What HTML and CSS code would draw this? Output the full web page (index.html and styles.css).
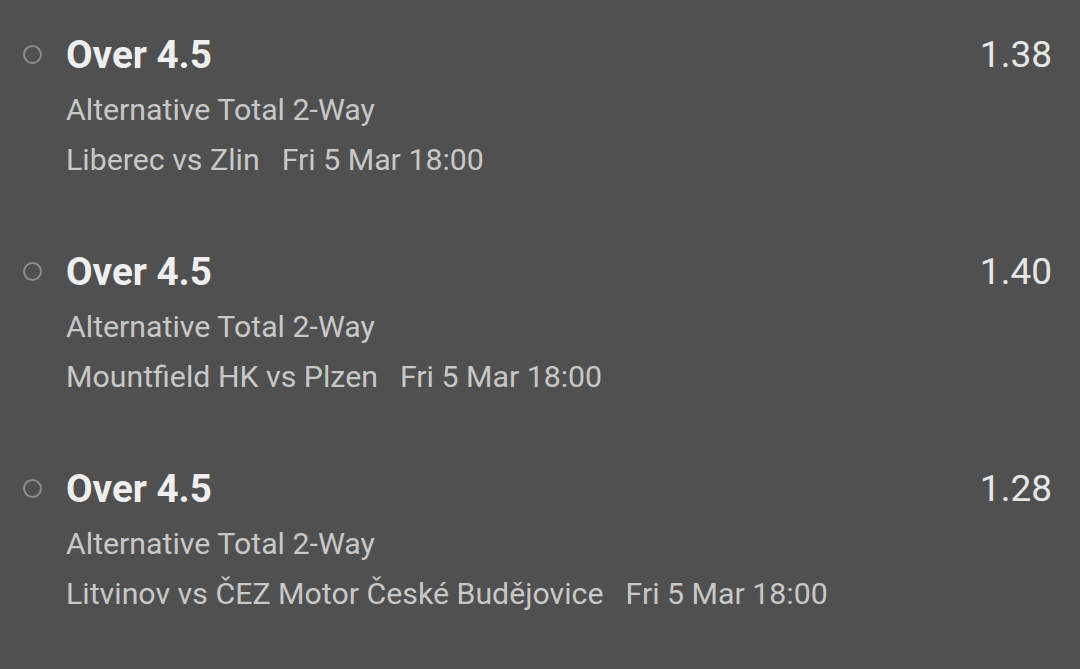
FILE: index.html
```html
<!DOCTYPE html>
<html lang="en">
<head>
    <meta charset="UTF-8">
    <title>Bets</title>
    <link rel="stylesheet" href="styles.css">
</head>
<body>
<ul class="bets">
    <li class="bet">
        <span class="radio"></span>
        <div class="info">
            <div class="top">
                <span class="pick">Over 4.5</span>
                <span class="odds">1.38</span>
            </div>
            <div class="market">Alternative Total 2-Way</div>
            <div class="match">Liberec vs Zlin<span class="time">Fri 5 Mar 18:00</span></div>
        </div>
    </li>
    <li class="bet">
        <span class="radio"></span>
        <div class="info">
            <div class="top">
                <span class="pick">Over 4.5</span>
                <span class="odds">1.40</span>
            </div>
            <div class="market">Alternative Total 2-Way</div>
            <div class="match">Mountfield HK vs Plzen<span class="time">Fri 5 Mar 18:00</span></div>
        </div>
    </li>
    <li class="bet">
        <span class="radio"></span>
        <div class="info">
            <div class="top">
                <span class="pick">Over 4.5</span>
                <span class="odds">1.28</span>
            </div>
            <div class="market">Alternative Total 2-Way</div>
            <div class="match">Litvinov vs ČEZ Motor České Budějovice<span class="time">Fri 5 Mar 18:00</span></div>
        </div>
    </li>
</ul>
</body>
</html>
```

FILE: styles.css
```css
*{
    margin: 0;
    padding: 0;
}
html, body{
    background: #505050;
}
body{
    font-family: Roboto, "Noto Sans", sans-serif;
    color: #c8c8c8;
}
li{
    list-style: none;
}
.bet{
    display: flex;
    align-items: flex-start;
    padding: 32px 28px 32px 23px;
}
.radio{
    width: 15px;
    height: 15px;
    border: 2px solid #8c8c8c;
    border-radius: 50%;
    margin-top: 13px;
    margin-right: 24px;
    flex: none;
}
.info{
    flex: 1;
}
.top{
    display: flex;
    justify-content: space-between;
    align-items: center;
    height: 44px;
    margin-bottom: 9px;
}
.pick{
    font-size: 38.6px;
    font-weight: bold;
    color: #efefef;
}
.odds{
    font-size: 37px;
    color: #e6e6e6;
}
.market, .match{
    font-size: 30.3px;
    line-height: 50px;
}
.time{
    margin-left: 22px;
}
```
